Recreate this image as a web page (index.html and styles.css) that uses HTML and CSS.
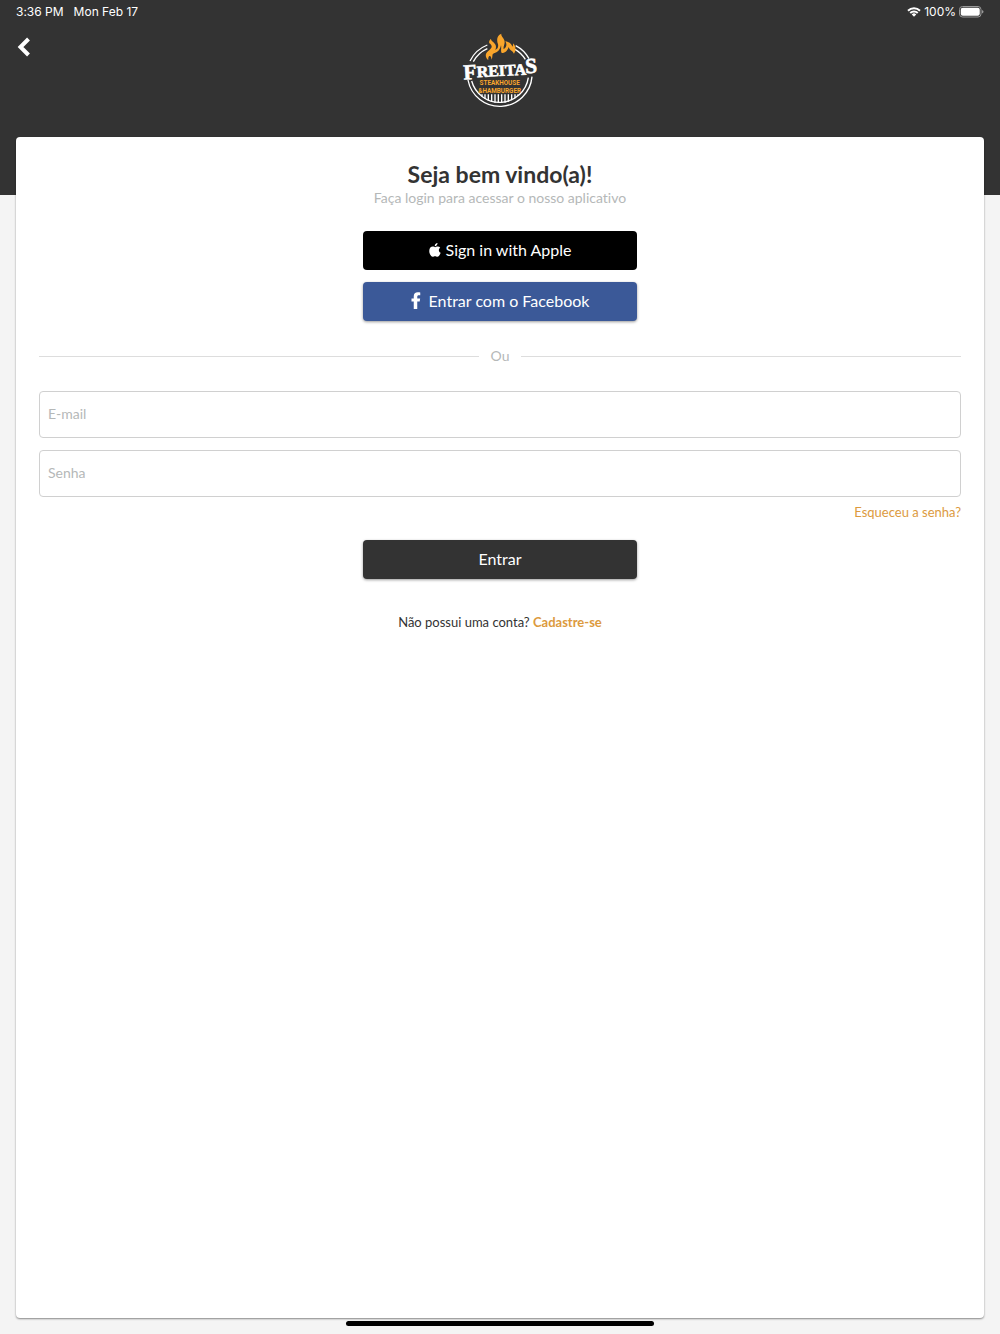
FILE: index.html
```html
<!DOCTYPE html>
<html lang="pt-BR">
<head>
    <meta charset="UTF-8">
    <meta name="viewport" content="width=device-width, initial-scale=1.0">
    <title>Freitas Steakhouse - Login</title>
    <link rel="stylesheet" href="styles.css">
</head>
<body>

<!-- Status bar -->
<div class="status-bar">
    <div class="status-left">
        <span>3:36 PM</span>
        <span>Mon Feb 17</span>
    </div>
    <div class="status-right">
        <svg class="wifi" viewBox="0 0 28 20" aria-hidden="true">
            <path d="M2 7.500a17 17 0 0 1 24 0" />
            <path d="M6.500 12a10.600 10.600 0 0 1 15 0" />
            <path class="dot" d="M14 19.500l-4.500-4.700a6.400 6.400 0 0 1 9 0z" />
        </svg>
        <span>100%</span>
        <svg class="battery" viewBox="0 0 50 24" aria-hidden="true">
            <rect class="shell" x="1" y="1" width="43" height="21" rx="6" />
            <rect x="3.500" y="3.500" width="38" height="16" rx="4" fill="#fff" />
            <path d="M46 8q3 1 3 3.500t-3 3.500z" fill="#999" />
        </svg>
    </div>
</div>

<header class="header">
    <button class="back-btn" type="button" aria-label="Voltar">
        <svg viewBox="0 0 12 20" aria-hidden="true">
            <path d="M10.500 2L2.500 10l8 8" />
        </svg>
    </button>
    <svg class="logo" viewBox="0 -3 300 273" role="img" aria-label="Freitas Steakhouse &amp; Hamburger">
        <!-- rings -->
        <g fill="none" stroke="#fff" stroke-width="4">
            <path d="M60 108A97 97 0 0 1 112 60" />
            <path d="M70 110A87 87 0 0 1 112 71" />
            <path d="M197 62A97 97 0 0 1 237 101" />
            <path d="M195 73A87 87 0 0 1 226 103" />
            <path d="M54 165A97 97 0 0 0 246 155" />
            <path d="M65 168A87 87 0 0 0 235 158" />
        </g>
        <!-- grill -->
        <path d="M96 208v7M105 208v14M115 208v19M125 208v23M135 208v25M145 208v26M155 208v26M165 208v25M175 208v22M185 208v18M195 208v12M204 208v5" stroke="#fff" stroke-width="4" />
        <!-- flame -->
        <path fill="#f9a52b" d="M115 105C106 99 104 86 114 79C124 71 131 64 118 55C116 49 119 44 123 41C121 49 138 53 138 65C138 70 137 72 135 75C142 73 146 67 144 58C139 44 141 31 154 26C152 35 164 40 164 51C164 60 159 66 161 72C169 67 172 59 166 49C178 51 185 57 187 65C189 62 190 59 189 55C199 65 198 77 192 86C188 77 178 76 176 66C173 76 167 84 155 84C151 77 155 68 153 61C150 75 143 82 132 85C124 88 130 97 124 104C125 95 120 91 117 94C114 98 115 102 115 105Z" />
        <g class="brand" transform="rotate(-3 150 140)">
            <text class="brand-big" x="40" y="158">F</text>
            <text class="brand-name" x="80" y="153">REITA</text>
            <text class="brand-big" x="226" y="149">S</text>
        </g>
        <g class="brand-sub">
            <text x="149" y="181">STEAKHOUSE</text>
            <text x="149" y="203">&amp;HAMBURGER</text>
        </g>
    </svg>
</header>

<main class="card">
    <h1 class="title">Seja bem vindo(a)!</h1>
    <p class="subtitle">Faça login para acessar o nosso aplicativo</p>

    <div class="social">
        <button class="btn apple" type="button">
            <svg class="apple-icon" viewBox="0 0 24 28" aria-hidden="true">
                <path d="M17 0c.3 3-2.500 6.500-5.500 6.300C11.200 3.200 14 .3 17 0zM22.500 9.500c-4.200 2.600-3.500 8.200.9 10C22 23.500 19.500 27.600 16.800 27.600c-2 0-2.500-1.200-4.700-1.200s-2.800 1.200-4.700 1.200C4 27.600.5 21 .5 15.800.5 10 4 7.200 7.500 7.200c2 0 3.600 1.300 4.800 1.300s3-1.500 5.400-1.400c2 .1 3.700.9 4.800 2.400z" />
            </svg>
            Sign in with Apple
        </button>
        <button class="btn facebook" type="button">
            <svg class="facebook-icon" viewBox="0 0 20 34" aria-hidden="true">
                <path d="M5.500 34V19H1v-6h4.500V8.500C5.500 3.400 8.500.5 13.500.5c2.200 0 5 .4 5 .4v5.500h-2.800c-2.400 0-3.200 1.400-3.200 3V13h5.800l-.9 6h-4.900v15z" />
            </svg>
            Entrar com o Facebook
        </button>
    </div>

    <div class="divider"><span>Ou</span></div>

    <form class="login-form">
        <input class="field" type="email" placeholder="E-mail" aria-label="E-mail">
        <input class="field" type="password" placeholder="Senha" aria-label="Senha">
        <a class="forgot" href="#">Esqueceu a senha?</a>
        <button class="btn submit" type="submit">Entrar</button>
    </form>

    <p class="signup">Não possui uma conta? <a href="#">Cadastre-se</a></p>
</main>

<div class="home-bar"><span></span></div>

</body>
</html>
```
FILE: styles.css
```css
* {
    margin: 0;
    padding: 0;
    box-sizing: border-box;
}

body {
    font-family: Lato, "Open Sans", sans-serif;
    font-variant-ligatures: none;
    background: linear-gradient(#333 195px, #f4f4f4 195px);
    color: #333;
    min-height: 100vh;
    display: flex;
    flex-direction: column;
}

/* Status bar */
.status-bar {
    height: 24px;
    padding: 0 16px 1px;
    display: flex;
    justify-content: space-between;
    align-items: center;
    font-family: Inter, sans-serif;
    font-size: 12px;
    color: #fff;
}

.status-left {
    display: flex;
    gap: 10px;
}

.status-right {
    display: flex;
    align-items: center;
    gap: 3px;
}

.wifi {
    width: 14px;
    height: 10px;
    fill: none;
    stroke: #fff;
    stroke-width: 4;
}

.wifi .dot {
    fill: #fff;
    stroke: none;
}

.battery {
    width: 25px;
    height: 12px;
}

.battery .shell {
    fill: none;
    stroke: #999;
    stroke-width: 2;
}

/* Header */
.header {
    height: 113px;
    padding: 0 16px;
    display: grid;
    grid-template-columns: 1fr auto 1fr;
    align-items: start;
}

.back-btn {
    width: 16px;
    height: 20px;
    margin-top: 13px;
    background: none;
    border: none;
    cursor: pointer;
}

.back-btn svg {
    display: block;
    width: 16px;
    height: 20px;
    fill: none;
    stroke: #fff;
    stroke-width: 4;
}

.logo {
    width: 100px;
    height: 91px;
}

.brand {
    fill: #fff;
    font-family: "Liberation Serif", serif;
    font-weight: bold;
    stroke: #fff;
    stroke-width: 2;
}

.brand-big {
    font-size: 64px;
}

.brand-name {
    font-size: 48px;
}

.brand-sub {
    fill: #f9a52b;
    font-family: Roboto, sans-serif;
    font-size: 19px;
    font-weight: bold;
    text-anchor: middle;
}

/* Card */
.card {
    flex: 1;
    margin: 0 16px;
    padding: 23px;
    background: #fff;
    border-radius: 4px;
    box-shadow: 0 1px 2px rgba(0, 0, 0, 0.45);
}

.title {
    font-size: 23px;
    line-height: 28px;
    text-align: center;
}

.subtitle {
    font-size: 14px;
    line-height: 20px;
    color: #b5b8b8;
    text-align: center;
}

.social {
    margin-top: 23px;
    display: flex;
    flex-direction: column;
    align-items: center;
    gap: 12px;
}

.btn {
    width: 274px;
    max-width: 100%;
    height: 39px;
    padding-bottom: 2px;
    display: flex;
    justify-content: center;
    align-items: center;
    border: none;
    border-radius: 4px;
    color: #fff;
    font-family: inherit;
    font-size: 16px;
    cursor: pointer;
}

.btn svg {
    fill: #fff;
}

.apple {
    gap: 5px;
    background: #000;
}

.apple-icon {
    width: 12px;
    height: 14px;
}

.facebook {
    gap: 8px;
    background: #3b5998;
    box-shadow: 0 1px 3px rgba(0, 0, 0, 0.4);
}

.facebook-icon {
    width: 10px;
    height: 17px;
}

.divider {
    margin: 25px 0;
    display: flex;
    align-items: center;
    gap: 12px;
    font-size: 14px;
    line-height: 20px;
    color: #b5b8b8;
}

.divider::before,
.divider::after {
    content: "";
    flex: 1;
    height: 1px;
    background: #ddd;
}

/* Form */
.login-form {
    display: flex;
    flex-direction: column;
    align-items: center;
}

.field {
    width: 100%;
    height: 47px;
    margin-bottom: 12px;
    padding: 0 8px 3px;
    border: 1px solid #d0d0d0;
    border-radius: 4px;
    font-family: inherit;
    font-size: 14px;
    color: #333;
}

.field::placeholder {
    color: #b5b8b8;
}

.forgot {
    align-self: flex-end;
    margin-top: -5px;
    font-size: 13px;
    line-height: 16px;
    color: #dc9a3e;
    text-decoration: none;
}

.submit {
    margin-top: 20px;
    background: #333;
    box-shadow: 0 1px 3px rgba(0, 0, 0, 0.4);
}

.signup {
    margin-top: 34px;
    font-size: 13px;
    line-height: 18px;
    text-align: center;
}

.signup a {
    color: #dc9a3e;
    font-weight: bold;
    text-decoration: none;
}

/* Home indicator */
.home-bar {
    height: 16px;
    display: flex;
    justify-content: center;
    align-items: center;
    padding-bottom: 5px;
}

.home-bar span {
    width: 308px;
    height: 5px;
    border-radius: 3px;
    background: #000;
}
```
